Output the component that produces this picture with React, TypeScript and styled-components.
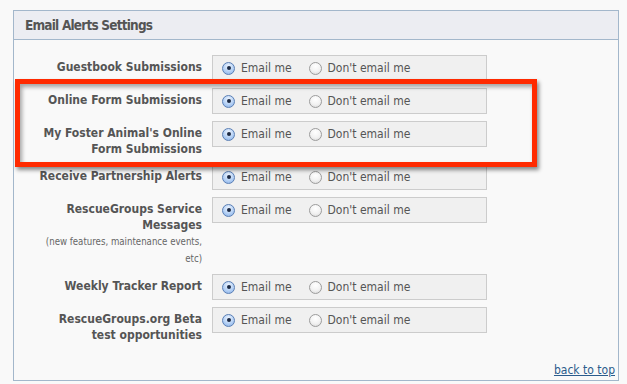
import styled, { createGlobalStyle } from "styled-components";

type Row = {
  id: string;
  label: string[];
  note?: string[];
};

const rows: Row[] = [
  { id: "guestbook", label: ["Guestbook Submissions"] },
  { id: "online-form", label: ["Online Form Submissions"] },
  { id: "foster-form", label: ["My Foster Animal's Online", "Form Submissions"] },
  { id: "partnership", label: ["Receive Partnership Alerts"] },
  {
    id: "service",
    label: ["RescueGroups Service", "Messages"],
    note: ["(new features, maintenance events,", "etc)"],
  },
  { id: "tracker", label: ["Weekly Tracker Report"] },
  { id: "beta", label: ["RescueGroups.org Beta", "test opportunities"] },
];

const GlobalStyle = createGlobalStyle`
  html, body {
    margin: 0;
    padding: 0;
    background: #f9f9f9;
  }
  body {
    font-family: "DejaVu Sans Condensed", "DejaVu Sans", Verdana, sans-serif;
    color: #555;
  }
`;

export default function App() {
  return (
    <Page>
      <GlobalStyle />
      <Panel>
        <PanelHeader>Email Alerts Settings</PanelHeader>
        <PanelBody>
          {rows.map((row) => (
            <SettingRow key={row.id}>
              <Label>
                {row.label.map((line) => (
                  <div key={line}>{line}</div>
                ))}
                {row.note && (
                  <Note>
                    {row.note.map((line) => (
                      <div key={line}>{line}</div>
                    ))}
                  </Note>
                )}
              </Label>
              <ChoiceBox>
                <Option>
                  <Radio $checked />
                  Email me
                </Option>
                <Option>
                  <Radio />
                  Don't email me
                </Option>
              </ChoiceBox>
            </SettingRow>
          ))}
          <Footer>
            <BackLink href="#top">back to top</BackLink>
          </Footer>
        </PanelBody>
      </Panel>
      <Highlight />
    </Page>
  );
}

const Page = styled.div`
  position: relative;
  padding: 10px 9px 3px 13px;
`;

const Panel = styled.section`
  width: 606px;
  box-sizing: border-box;
  border: 1px solid #a3b7cb;
  background: #f9f9f9;
`;

const PanelHeader = styled.h2`
  margin: 0;
  height: 28px;
  padding-left: 11px;
  display: flex;
  align-items: center;
  background: #ecedf2;
  border-bottom: 1px solid #a3b7cb;
  font-size: 13.5px;
  letter-spacing: -0.8px;
  font-weight: bold;
  color: #555;
`;

const PanelBody = styled.div`
  padding: 15px 3px 2px 0;
`;

const SettingRow = styled.div`
  display: flex;
  align-items: flex-start;
  margin-bottom: 7px;
`;

const Label = styled.div`
  width: 188px;
  padding-top: 4px;
  text-align: right;
  font-size: 12px;
  line-height: 16px;
  font-weight: bold;
  color: #555;
`;

const Note = styled.div`
  font-weight: normal;
  font-size: 9.6px;
  color: #666;
  line-height: 17px;
`;

const ChoiceBox = styled.div`
  margin-left: 10px;
  width: 275px;
  height: 26px;
  box-sizing: border-box;
  padding-left: 9px;
  display: flex;
  align-items: center;
  background: #f0f0f0;
  border: 1px solid #cccccc;
  font-size: 12px;
  color: #555;
`;

const Option = styled.label`
  display: flex;
  align-items: center;
  gap: 6px;
  margin-right: 17px;
`;

const Radio = styled.span<{ $checked?: boolean }>`
  position: relative;
  width: 13px;
  height: 13px;
  box-sizing: border-box;
  border-radius: 50%;
  border: 1px solid ${(p) => (p.$checked ? "#5a7fb5" : "#9c9c9c")};
  background: ${(p) =>
    p.$checked
      ? "radial-gradient(circle at 50% 30%, #eef5ff 0%, #b5d1f5 55%, #86aee6 100%)"
      : "radial-gradient(circle at 50% 30%, #ffffff 0%, #f2f2f2 55%, #d6d6d6 100%)"};

  &::after {
    content: "";
    display: ${(p) => (p.$checked ? "block" : "none")};
    position: absolute;
    left: 50%;
    top: 50%;
    width: 4px;
    height: 4px;
    margin: -2px 0 0 -2px;
    border-radius: 50%;
    background: #1c2a44;
  }
`;

const Footer = styled.div`
  text-align: right;
  padding-top: 12px;
  font-size: 12px;
  line-height: 16px;
`;

const BackLink = styled.a`
  color: #2b5c8c;
  text-decoration: underline;
`;

const Highlight = styled.div`
  position: absolute;
  left: 15px;
  top: 79px;
  width: 522px;
  height: 88px;
  box-sizing: border-box;
  border: 5px solid #ff2a00;
  box-shadow: 2px 3px 4px rgba(0, 0, 0, 0.45), inset 2px 3px 4px rgba(0, 0, 0, 0.35);
  pointer-events: none;
`;
